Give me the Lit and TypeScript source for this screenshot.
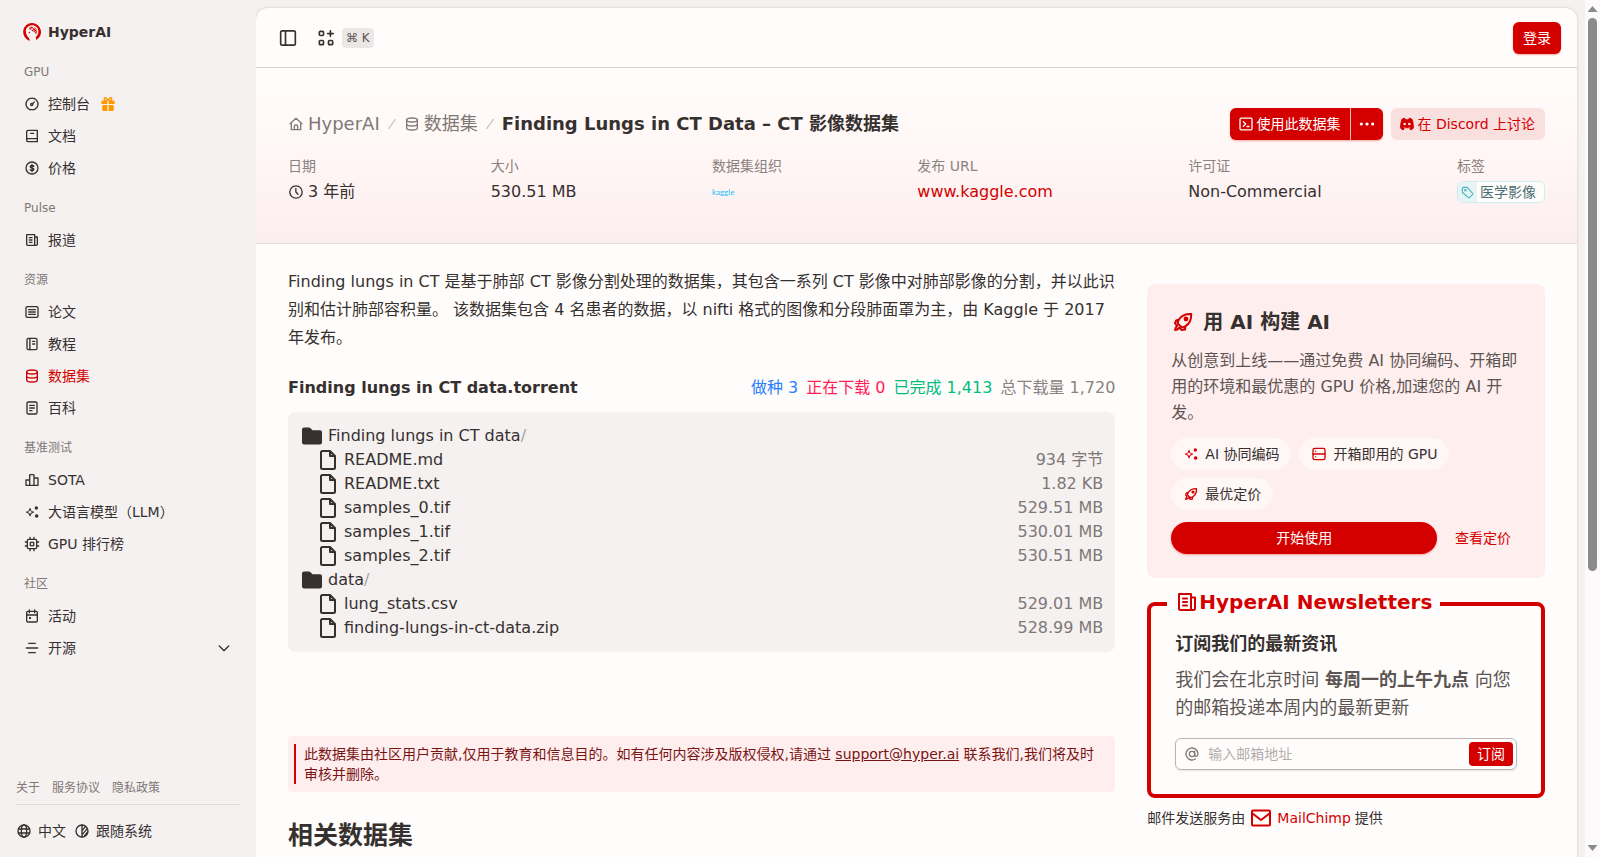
import { LitElement, html, css, svg, nothing, TemplateResult, SVGTemplateResult } from "lit";
import { customElement, property } from "lit/decorators.js";

/* Icon artwork on a 24 x 24 grid, stroked unless the shape sets its own fill. */
const ICONS: Record<string, SVGTemplateResult> = {
  gauge: svg`<path d="M8 20.200A9 9 0 1 1 16 20.200Q12 20.800 8 20.200Z"/><circle cx="11.500" cy="12.800" r="1.600"/><path d="M12.800 11.500L15.500 8.800"/>`,
  book: svg`<path d="M4 18V5.500A2 2 0 0 1 6 3.500H20V20.500H6A2.300 2.300 0 0 1 4 18A2.300 2.300 0 0 1 6 16H20M10 8H14.500"/>`,
  price: svg`<circle cx="12" cy="12" r="9"/><path d="M14.800 9.500C14 7.900 9.300 7.700 9.300 10C9.300 12.400 14.800 11.600 14.800 14.100C14.800 16.400 9.800 16.200 9.100 14.700M12 6.500V17.500"/>`,
  news: svg`<path d="M4 4H16V20H5.500A1.500 1.500 0 0 1 4 18.500ZM16 7.500H20V18.500A1.500 1.500 0 0 1 18.500 20H15M8 8.500H12M8 12H12M8 15.500H12"/>`,
  paper: svg`<rect x="3" y="4" width="18" height="16" rx="2"/><path d="M7 8.500H17M7 12H17M7 15.500H17"/>`,
  notebook: svg`<rect x="4.500" y="3.500" width="15" height="17" rx="2"/><path d="M8.800 3.500V20.500M13 8H16M13 12H16"/>`,
  database: svg`<ellipse cx="12" cy="6" rx="8" ry="3"/><path d="M4 6V18C4 19.800 7.500 21 12 21S20 19.800 20 18V6M4 12C4 13.800 7.500 15 12 15S20 13.800 20 12"/>`,
  wiki: svg`<rect x="4.500" y="3" width="15" height="18" rx="2"/><path d="M8.500 8H15.500M8.500 12H15.500M8.500 16H12"/>`,
  chart: svg`<path d="M3 12H8.500V20H3ZM8.500 20V5A1 1 0 0 1 9.500 4H14A1 1 0 0 1 15 5V20M15 9H21V20H8.500"/>`,
  sparkles: svg`<path d="M9 7C9.800 10.800 10.400 11.300 14 12.200C10.400 13.100 9.800 13.700 9 17.500C8.200 13.700 7.600 13.100 4 12.200C7.600 11.300 8.200 10.800 9 7Z"/><circle cx="18.500" cy="6" r="1.500" fill="currentColor"/><circle cx="19" cy="18" r="1.700" fill="currentColor"/>`,
  chip: svg`<rect x="5" y="5" width="14" height="14" rx="2"/><rect x="9.500" y="9.500" width="5" height="5"/><path d="M9 2V4.500M15 2V4.500M9 19.500V22M15 19.500V22M2 9H4.500M2 15H4.500M19.500 9H22M19.500 15H22"/>`,
  calendar: svg`<rect x="4" y="5" width="16" height="16" rx="2"/><path d="M4 10.500H20M8 2.800V7M16 2.800V7"/><rect x="7.500" y="13.500" width="3" height="3" fill="currentColor" stroke="none"/>`,
  lines: svg`<path d="M7 5H17M3.500 12H20.500M7 19H17"/>`,
  chevron: svg`<path d="M5 9L12 16L19 9"/>`,
  globe: svg`<circle cx="12" cy="12" r="9"/><ellipse cx="12" cy="12" rx="4" ry="9"/><path d="M3.500 9H20.500M3.500 15H20.500"/>`,
  contrast: svg`<circle cx="12" cy="12" r="9"/><path d="M12 3V21M12.500 11L17 5.500M12.500 17L20 8.500M15 20L20.500 13.500"/>`,
  panel: svg`<rect x="3.200" y="3.500" width="17.600" height="17" rx="2"/><path d="M9 3.500V20.500"/>`,
  apps: svg`<rect x="4" y="4" width="5" height="5" rx="1.200"/><rect x="4" y="15" width="5" height="5" rx="1.200"/><rect x="15" y="15" width="5" height="5" rx="1.200"/><path d="M17.300 3.300V10M14 6.700H20.700"/>`,
  home: svg`<path d="M3 11.500L12 3.500L21 11.500M5 10V20.500H19V10M9.500 20.500V16A2.500 2.500 0 0 1 14.500 16V20.500"/>`,
  slash: svg`<path stroke-width="1.600" d="M7 19L17 5"/>`,
  clock: svg`<circle cx="12" cy="12" r="9.300"/><path d="M11.800 6.800V12L15 15.300"/>`,
  terminal: svg`<rect x="3" y="3.300" width="18" height="17.400" rx="2"/><path d="M8 8.500L11.500 12L8 15.500M13.500 15.800H16.500"/>`,
  dots: svg`<g fill="currentColor" stroke="none"><circle cx="3.500" cy="12" r="2.400"/><circle cx="12" cy="12" r="2.400"/><circle cx="20.500" cy="12" r="2.400"/></g>`,
  discord: svg`<path fill="currentColor" stroke="none" fill-rule="evenodd" d="M8.800 2.500L10 5H14L15.200 2.500C17.500 2.800 19 3.600 20 4.500C21.600 8.500 22.500 13 22.300 18C21 19.800 19.200 20.900 17.200 21.500L15.500 18.800Q12 19.600 8.500 18.800L6.800 21.500C4.800 20.900 3 19.800 1.700 18C1.500 13 2.400 8.500 4 4.500C5 3.600 6.500 2.800 8.800 2.500ZM8.500 10A2 2 0 1 0 8.500 14A2 2 0 1 0 8.500 10ZM15.500 10A2 2 0 1 0 15.500 14A2 2 0 1 0 15.500 10ZM6.500 17L8.500 18.800L15.500 18.800L17.500 17Q12 19 6.500 17Z"/>`,
  tag: svg`<path d="M2.500 4.500A2 2 0 0 1 4.500 2.500H11.500L21.500 13.500Q22.500 14.500 21.500 15.500L15.500 21.500Q14.500 22.500 13.500 21.500L2.500 11.500Z"/><circle cx="8" cy="8" r="1.300"/>`,
  rocket: svg`<path d="M8 9.500C10.300 6 14.500 3.800 20.200 4C20.500 9.800 18 14 14.500 16.200L14 19.500L10.800 20L8 17.800C6.500 19.800 5.200 20 4 20C4.100 18.800 4.300 17.600 6 16L4 13.200L5.200 10.500ZM8 9.500C7 11 6.500 12.500 7 13.800L10.300 17C11.700 17.500 13 17.200 14.500 16.200"/><circle cx="15" cy="9" r="1.400" fill="currentColor"/>`,
  server: svg`<rect x="3" y="3.500" width="18" height="17" rx="2.500"/><path d="M3 12H21M7 7.700H7.200M7 16.300H7.200"/>`,
  folder: svg`<path fill="currentColor" stroke="none" d="M2 5.500A2 2 0 0 1 4 3.500H8.800Q9.800 3.500 10.500 4.200L12.500 6.200H20A2 2 0 0 1 22 8.200V18.500A2 2 0 0 1 20 20.500H4A2 2 0 0 1 2 18.500Z"/>`,
  file: svg`<path d="M5 4.500A1.500 1.500 0 0 1 6.500 3H14L19 8V19.500A1.500 1.500 0 0 1 17.500 21H6.500A1.500 1.500 0 0 1 5 19.500ZM14 3.500V8H18.500"/>`,
  at: svg`<circle cx="12" cy="12" r="4"/><path d="M16 8V13.200C16 16.800 21 16.500 21 12A9 9 0 1 0 17 19.500"/>`,
  mail: svg`<rect x="3" y="4.500" width="18" height="15" rx="1"/><path d="M3.500 7.500L12 14L20.500 7.500"/>`,
  gift: svg`<path fill="currentColor" stroke="none" d="M2 7H6.200C4.300 4.800 5.200 1.500 8 1.500C10 1.500 11.300 3.200 12 4.700C12.700 3.200 14 1.500 16 1.500C18.800 1.500 19.700 4.800 17.800 7H22V12H13V7H11V12H2ZM3.500 13.500H11V22.500H5A1.500 1.500 0 0 1 3.500 21ZM13 13.500H20.500V21A1.500 1.500 0 0 1 19 22.500H13ZM7.500 3.800C6.500 5 8 6.300 10 6.300C9.500 4.700 8.500 3.300 7.500 3.800ZM16.500 3.800C15.500 3.300 14.500 4.700 14 6.300C16 6.300 17.500 5 16.500 3.800Z"/>`,
  logo: svg`<g stroke="none"><path fill="currentColor" d="M12 0A12 12 0 0 1 17.500 22.700L17 18.500C19.500 16.500 20.800 13.500 20.500 10.500C20 6 16.500 3 12 3C7 3 3.500 7 3.800 11.500C4 14.500 5 17 7.500 19.300L9.500 23.700A12 12 0 0 1 12 0Z"/><path fill="currentColor" d="M8 6.500C10.500 4 16 4.500 18 8.500C19 11.500 18.500 14 17 14.500C16.500 11.500 13.500 12 12.500 10.500C11.500 9 8.500 9 8 6.500Z"/><path fill="none" stroke="#f5f1f1" stroke-width="1" d="M10 6.500L17 12M13 5.500L18 9.500M10.500 9.500L15 5.500"/><circle fill="currentColor" cx="8.500" cy="12.500" r="1"/></g>`,
};

@customElement("hy-icon")
export class HyIcon extends LitElement {
  @property() name = "";
  static styles = css`
    :host { display: inline-flex; flex: none; width: var(--icon-size, 16px); height: var(--icon-size, 16px); }
    .art { width: 100%; height: 100%; display: block; overflow: visible; }
  `;
  render() {
    return html`<svg class="art" viewBox="0 0 24 24" fill="none" stroke="currentColor" stroke-width="2"
      stroke-linejoin="round" stroke-linecap="round" aria-hidden="true">${ICONS[this.name] ?? nothing}</svg>`;
  }
}

interface NavItem { icon: string; label: string; active?: boolean; gift?: boolean; more?: boolean }
interface NavGroup { title: string; items: NavItem[] }

const NAV: NavGroup[] = [
  { title: "GPU", items: [
    { icon: "gauge", label: "控制台", gift: true },
    { icon: "book", label: "文档" },
    { icon: "price", label: "价格" },
  ] },
  { title: "Pulse", items: [{ icon: "news", label: "报道" }] },
  { title: "资源", items: [
    { icon: "paper", label: "论文" },
    { icon: "notebook", label: "教程" },
    { icon: "database", label: "数据集", active: true },
    { icon: "wiki", label: "百科" },
  ] },
  { title: "基准测试", items: [
    { icon: "chart", label: "SOTA" },
    { icon: "sparkles", label: "大语言模型（LLM）" },
    { icon: "chip", label: "GPU 排行榜" },
  ] },
  { title: "社区", items: [
    { icon: "calendar", label: "活动" },
    { icon: "lines", label: "开源", more: true },
  ] },
];

const TREE = [
  { folder: "Finding lungs in CT data", files: [
    ["README.md", "934 字节"],
    ["README.txt", "1.82 KB"],
    ["samples_0.tif", "529.51 MB"],
    ["samples_1.tif", "530.01 MB"],
    ["samples_2.tif", "530.51 MB"],
  ] },
  { folder: "data", files: [
    ["lung_stats.csv", "529.01 MB"],
    ["finding-lungs-in-ct-data.zip", "528.99 MB"],
  ] },
];

const base = css`
  * { box-sizing: border-box; }
  a { color: inherit; text-decoration: none; }
  button, input { font: inherit; color: inherit; border: 0; padding: 0; margin: 0; background: none; }
  button { cursor: pointer; }
  h1, h2, h3, p, ul, dl, dd, ol { margin: 0; padding: 0; }
  ul, ol { list-style: none; }
`;

@customElement("hy-sidebar")
export class HySidebar extends LitElement {
  static styles = [base, css`
    :host { display: flex; flex-direction: column; justify-content: space-between; padding: 16px 16px 10px; font-size: 14px; line-height: 20px; }
    .brand { display: flex; align-items: center; gap: 7px; height: 32px; margin-bottom: 8px; padding-left: 7px; font-weight: 700; }
    .brand hy-icon { --icon-size: 18px; color: #d40000; }
    .group { margin-bottom: 8px; }
    .title { display: flex; align-items: center; height: 32px; padding-left: 8px; font-size: 12px; font-weight: 400; color: #807876; }
    .item { display: flex; align-items: center; gap: 8px; height: 32px; padding: 0 8px; }
    .active { color: #d40000; }
    .gift { margin-left: 2px; color: #ff9900; }
    .more { margin-left: auto; }
    .legal { display: flex; gap: 12px; padding-bottom: 6px; border-bottom: 1px solid #e1dcdc; font-size: 12px; color: #807876; }
    .prefs { display: flex; gap: 8px; padding-top: 10px; }
    .pref { display: flex; align-items: center; gap: 6px; height: 32px; }
  `];
  private item(i: NavItem): TemplateResult {
    return html`<li><a class="item ${i.active ? "active" : ""}" href="#">
      <hy-icon name=${i.icon}></hy-icon><span>${i.label}</span>
      ${i.gift ? html`<hy-icon class="gift" name="gift"></hy-icon>` : nothing}
      ${i.more ? html`<hy-icon class="more" name="chevron"></hy-icon>` : nothing}
    </a></li>`;
  }
  render() {
    return html`
      <nav>
        <a class="brand" href="#"><hy-icon name="logo"></hy-icon>HyperAI</a>
        ${NAV.map((g) => html`<section class="group"><h2 class="title">${g.title}</h2><ul>${g.items.map((i) => this.item(i))}</ul></section>`)}
      </nav>
      <footer>
        <div class="legal"><a href="#">关于</a><a href="#">服务协议</a><a href="#">隐私政策</a></div>
        <div class="prefs">
          <button class="pref"><hy-icon name="globe"></hy-icon>中文</button>
          <button class="pref"><hy-icon name="contrast"></hy-icon>跟随系统</button>
        </div>
      </footer>`;
  }
}

@customElement("hy-hero")
export class HyHero extends LitElement {
  static styles = [base, css`
    :host { display: block; padding: 40px 32px 39px; border-bottom: 1px solid #e8dada; background: linear-gradient(#fffdfc, #fff5f4 60%, #fbeeee); }
    .top { display: flex; justify-content: space-between; align-items: center; height: 32px; margin-bottom: 16px; }
    .crumbs { display: flex; align-items: center; gap: 4px; font-size: 18px; line-height: 28px; color: #807876; }
    .crumb { display: flex; align-items: center; gap: 4px; }
    .slash { color: #c4bebc; }
    .name { font-size: 18px; font-weight: 700; color: #36302f; }
    .actions { display: flex; gap: 8px; font-size: 14px; }
    .split { display: flex; gap: 1px; border-radius: 6px; overflow: hidden; background: #f4c0c0; color: #fff; box-shadow: 0 1px 2px #d4000055; }
    .btn { display: flex; align-items: center; justify-content: center; gap: 2px; height: 32px; padding: 0 10px 0 8px; white-space: nowrap; }
    .use, .menu { background: #d40000; }
    .menu { width: 32px; padding: 0; }
    .discord { border-radius: 6px; background: #fadfdf; color: #d40000; }
    .meta { display: flex; flex-wrap: wrap; justify-content: space-between; }
    .fact { display: flex; flex-direction: column; gap: 4px; }
    .fact dt { font-size: 14px; line-height: 20px; color: #8a8280; }
    .fact dd { display: flex; align-items: center; gap: 4px; height: 24px; font-size: 16px; line-height: 24px; }
    .url { color: #d40000; }
    .kaggle { font: 8px/24px Lato, sans-serif; color: #20beff; }
    .tag { display: flex; align-items: center; height: 22px; border: 1px solid #cfecef; border-radius: 6px; overflow: hidden; background: #fffdfc; font-size: 14px; line-height: 20px; color: #4a6e70; }
    .mark { display: flex; align-items: center; height: 20px; padding: 0 3px; margin-right: 3px; background: #e6f4f6; color: #45b5bf; --icon-size: 13px; }
    .word { padding-right: 8px; }
  `];
  render() {
    return html`
      <div class="top">
        <div class="crumbs">
          <a class="crumb" href="#"><hy-icon name="home"></hy-icon>HyperAI</a>
          <hy-icon class="slash" name="slash"></hy-icon>
          <a class="crumb" href="#"><hy-icon name="database"></hy-icon>数据集</a>
          <hy-icon class="slash" name="slash"></hy-icon>
          <h1 class="name">Finding Lungs in CT Data – CT 影像数据集</h1>
        </div>
        <div class="actions">
          <div class="split">
            <button class="btn use"><hy-icon name="terminal"></hy-icon>使用此数据集</button>
            <button class="btn menu" aria-label="更多"><hy-icon name="dots"></hy-icon></button>
          </div>
          <a class="btn discord" href="#"><hy-icon name="discord"></hy-icon>在 Discord 上讨论</a>
        </div>
      </div>
      <dl class="meta">
        <div class="fact"><dt>日期</dt><dd><hy-icon name="clock"></hy-icon>3 年前</dd></div>
        <div class="fact"><dt>大小</dt><dd>530.51 MB</dd></div>
        <div class="fact"><dt>数据集组织</dt><dd><a class="kaggle" href="#">kaggle</a></dd></div>
        <div class="fact"><dt>发布 URL</dt><dd><a class="url" href="#">www.kaggle.com</a></dd></div>
        <div class="fact"><dt>许可证</dt><dd>Non-Commercial</dd></div>
        <div class="fact"><dt>标签</dt><dd><a class="tag" href="#"><span class="mark"><hy-icon name="tag"></hy-icon></span><span class="word">医学影像</span></a></dd></div>
      </dl>`;
  }
}

@customElement("hy-aside")
export class HyAside extends LitElement {
  static styles = [base, css`
    :host { display: block; padding-top: 16px; }
    .promo { padding: 24px; border-radius: 8px; background: #ffeeee; }
    .head { display: flex; align-items: center; gap: 8px; font-size: 20px; line-height: 28px; font-weight: 700; --icon-size: 24px; }
    .head hy-icon { color: #d40000; }
    .desc { margin: 12px 0; line-height: 26px; color: #5c5553; }
    .pills { display: flex; flex-wrap: wrap; gap: 8px; font-size: 14px; line-height: 20px; }
    .pill { display: flex; align-items: center; gap: 6px; height: 32px; padding: 0 12px; border-radius: 16px; background: #fff7f6; }
    .pill hy-icon { color: #d40000; }
    .cta { display: flex; gap: 8px; margin-top: 12px; font-size: 14px; line-height: 20px; }
    .start { flex: 1; height: 32px; border-radius: 16px; background: #d40000; color: #fff; box-shadow: 0 1px 2px #d4000055; }
    .plans { display: flex; align-items: center; padding: 0 10px; color: #d40000; }
    .letter { min-width: 0; margin: 12px 0 8px; padding: 12px 24px 24px; border: 4px solid #d40000; border-radius: 8px; }
    .legend { display: flex; align-items: center; margin-left: -8px; padding: 0 8px 4px; font-size: 20px; line-height: 24px; font-weight: 700; color: #d40000; --icon-size: 24px; }
    .lead { font-size: 18px; line-height: 28px; font-weight: 700; }
    .note { margin: 8px 0 16px; font-size: 18px; line-height: 28px; color: #5c5553; }
    .field { display: flex; align-items: center; gap: 8px; height: 32px; padding: 0 3px 0 8px; border: 1px solid #bab5b3; border-radius: 6px; box-shadow: 0 1px 2px #0000001a; font-size: 14px; line-height: 20px; color: #807876; }
    .hint { display: flex; }
    .email { flex: 1; min-width: 0; height: 24px; outline: 0; color: #36302f; }
    .email::placeholder { color: #b3aeac; opacity: 1; }
    .send { height: 24px; padding: 0 8px; border-radius: 4px; background: #d40000; color: #fff; }
    .credit { display: flex; align-items: center; gap: 4px; font-size: 14px; line-height: 24px; --icon-size: 24px; }
    .chimp { display: flex; align-items: center; gap: 4px; color: #d40000; }
  `];
  render() {
    return html`
      <section class="promo">
        <h2 class="head"><hy-icon name="rocket"></hy-icon>用 AI 构建 AI</h2>
        <p class="desc">从创意到上线——通过免费 AI 协同编码、开箱即用的环境和最优惠的 GPU 价格,加速您的 AI 开发。</p>
        <ul class="pills">
          <li class="pill"><hy-icon name="sparkles"></hy-icon>AI 协同编码</li>
          <li class="pill"><hy-icon name="server"></hy-icon>开箱即用的 GPU</li>
          <li class="pill"><hy-icon name="rocket"></hy-icon>最优定价</li>
        </ul>
        <div class="cta"><button class="start">开始使用</button><a class="plans" href="#">查看定价</a></div>
      </section>
      <fieldset class="letter">
        <legend class="legend"><hy-icon name="news"></hy-icon>HyperAI Newsletters</legend>
        <h3 class="lead">订阅我们的最新资讯</h3>
        <p class="note">我们会在北京时间 <strong>每周一的上午九点</strong> 向您的邮箱投递本周内的最新更新</p>
        <div class="field">
          <label class="hint" for="email"><hy-icon name="at"></hy-icon></label>
          <input class="email" id="email" type="email" aria-label="输入邮箱地址" placeholder="输入邮箱地址">
          <button class="send">订阅</button>
        </div>
      </fieldset>
      <p class="credit">邮件发送服务由 <a class="chimp" href="#"><hy-icon name="mail"></hy-icon>MailChimp</a> 提供</p>`;
  }
}

@customElement("app-root")
export class AppRoot extends LitElement {
  static styles = [base, css`
    :host { display: grid; grid-template-columns: 256px minmax(0, 1fr) 15px; height: 100vh; overflow: hidden; background: #f5f1f1; color: #36302f; font: 16px/24px "DejaVu Sans", "Noto Sans CJK SC", sans-serif; }
    .view { min-height: 0; overflow: hidden; padding: 8px 8px 0 0; }
    .panel { min-height: 100%; border-radius: 12px 12px 0 0; overflow: hidden; background: #fffdfc; box-shadow: 0 0 3px #0000002e; }
    .bar { display: flex; align-items: center; height: 60px; padding: 0 16px 0 22px; border-bottom: 1px solid #d4d1d1; }
    .tool { display: flex; align-items: center; gap: 6px; --icon-size: 20px; }
    .tool + .tool { margin-left: 18px; }
    .keys { padding: 0 4px; border-radius: 4px; background: #ebe7e7; font: 12px/20px "DejaVu Sans", sans-serif; color: #5c5553; }
    .login { height: 32px; margin-left: auto; padding: 0 10px; border-radius: 6px; background: #d40000; color: #fff; font-size: 14px; line-height: 20px; box-shadow: 0 1px 2px #d4000055; }
    .body { display: grid; grid-template-columns: repeat(3, minmax(0, 1fr)); gap: 32px; padding: 24px 32px; }
    .main { grid-column: span 2; }
    .intro { line-height: 28px; margin-bottom: 24px; }
    .torrent { display: flex; justify-content: space-between; margin-bottom: 12px; }
    .file { font-size: 16px; font-weight: 700; }
    .stats { display: flex; gap: 8px; }
    .seed { color: #2b7fff; }
    .leech { color: #ff2056; }
    .done { color: #00bc7d; }
    .total { color: #8a8280; }
    .tree { padding: 12px; border-radius: 8px; background: #f5f1f1; --icon-size: 24px; }
    .row { display: flex; align-items: center; gap: 4px; height: 24px; }
    .leaf { padding-left: 16px; }
    .sep { color: #a8a2a0; margin-left: -4px; }
    .size { margin-left: auto; color: #807876; }
    .alert { margin-top: 84px; padding: 8px 16px 8px 6px; border-radius: 4px; background: #ffeeee; color: #7a1414; font-size: 14px; line-height: 20px; }
    .quote { padding-left: 8px; border-left: 2px solid #d40000; }
    .mailto { text-decoration: underline; }
    .related { margin-top: 26px; font-size: 25px; line-height: 36px; font-weight: 700; }
    .track { display: flex; flex-direction: column; align-items: center; justify-content: space-between; padding: 6px 0; background: #fcfafb; }
    .up, .down { width: 10px; height: 6px; background: #8b8b8b; clip-path: polygon(50% 0, 100% 100%, 0 100%); }
    .down { clip-path: polygon(0 0, 100% 0, 50% 100%); }
    .rail { flex: 1; width: 9px; padding: 6px 0; }
    .thumb { height: 67.4%; border-radius: 5px; background: #8b8b8b; }
  `];
  render() {
    return html`
      <hy-sidebar></hy-sidebar>
      <div class="view">
        <div class="panel">
          <header class="bar">
            <button class="tool" aria-label="切换侧边栏"><hy-icon name="panel"></hy-icon></button>
            <button class="tool" aria-label="命令菜单"><hy-icon name="apps"></hy-icon><kbd class="keys">⌘ K</kbd></button>
            <button class="login">登录</button>
          </header>
          <hy-hero></hy-hero>
          <div class="body">
            <main class="main">
              <p class="intro">Finding lungs in CT 是基于肺部 CT 影像分割处理的数据集，其包含一系列 CT 影像中对肺部影像的分割，并以此识别和估计肺部容积量。 该数据集包含 4 名患者的数据，以 nifti 格式的图像和分段肺面罩为主，由 Kaggle 于 2017 年发布。</p>
              <div class="torrent">
                <h2 class="file">Finding lungs in CT data.torrent</h2>
                <div class="stats"><span class="seed">做种 3</span><span class="leech">正在下载 0</span><span class="done">已完成 1,413</span><span class="total">总下载量 1,720</span></div>
              </div>
              <ul class="tree">
                ${TREE.map((d) => html`
                  <li class="row"><hy-icon name="folder"></hy-icon><span>${d.folder}</span><span class="sep">/</span></li>
                  ${d.files.map(([name, size]) => html`<li class="row leaf"><hy-icon name="file"></hy-icon><span>${name}</span><span class="size">${size}</span></li>`)}`)}
              </ul>
              <div class="alert"><p class="quote">此数据集由社区用户贡献,仅用于教育和信息目的。如有任何内容涉及版权侵权,请通过 <a class="mailto" href="#">support@hyper.ai</a> 联系我们,我们将及时审核并删除。</p></div>
              <h2 class="related">相关数据集</h2>
            </main>
            <hy-aside></hy-aside>
          </div>
        </div>
      </div>
      <div class="track" aria-hidden="true"><i class="up"></i><div class="rail"><div class="thumb"></div></div><i class="down"></i></div>`;
  }
}
